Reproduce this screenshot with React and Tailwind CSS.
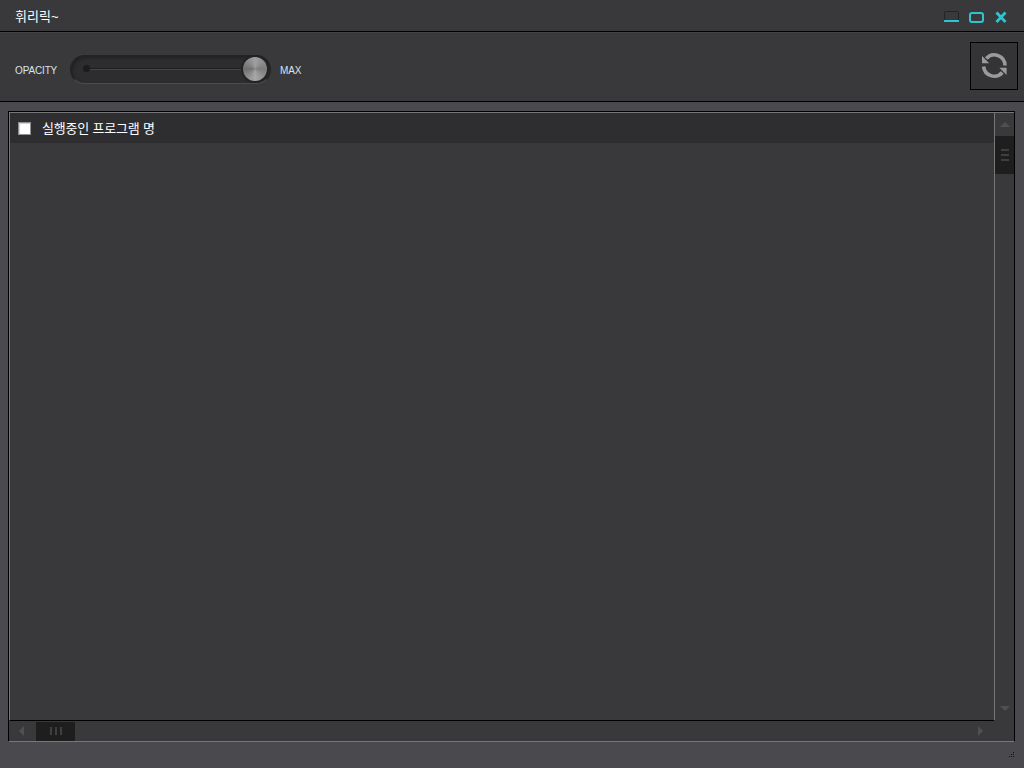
import React from "react";

function Refresh() {
  return (
    <svg width="28" height="28" viewBox="0 0 28 28" fill="none">
      <path d="M25 13.5A10.7 10.7 0 0 0 6.3 6.5" stroke="#9a9a9a" strokeWidth="3.6" />
      <path d="M3.6 14.5A10.7 10.7 0 0 0 22.3 20.5" stroke="#9a9a9a" strokeWidth="3.6" />
      <path d="M2 4V11.3H9.2z" fill="#9a9a9a" />
      <path d="M26.6 23V15.7H19.4z" fill="#9a9a9a" />
    </svg>
  );
}

export default function App() {
  return (
    <div className="w-[1024px] h-[768px] flex flex-col overflow-hidden bg-[#4a4a4e] text-white" style={{ fontFamily: '"Liberation Sans", "Noto Sans CJK KR", sans-serif' }}>
      <div className="h-[32px] shrink-0 flex items-center justify-between bg-[#39393c] border-b border-black pl-[15px] pr-[17px]">
        <span className="text-[13px] leading-none pt-[2px]">휘리릭~</span>
        <div className="flex items-start gap-[10px] pt-[3px]">
          <svg width="15" height="12" viewBox="0 0 15 12" fill="none">
            <rect x="0.5" y="0.5" width="14" height="9" rx="1.5" stroke="#242426" />
            <rect x="0" y="9" width="15" height="2" fill="#2fc4d4" />
          </svg>
          <svg width="15" height="12" viewBox="0 0 15 12" fill="none" className="mr-[1px]">
            <rect x="1" y="2" width="13" height="9" rx="2" stroke="#2fc4d4" strokeWidth="2" />
          </svg>
          <svg width="12" height="12" viewBox="0 0 12 12" fill="none">
            <path d="M1.5 1.5l9 9.5M10.5 1.5l-9 9.5" stroke="#2fc4d4" strokeWidth="2.8" />
          </svg>
        </div>
      </div>
      <div className="h-[70px] shrink-0 flex items-center justify-between bg-[#39393c] border-b border-black border-t border-t-[#444448] pl-[15px] pr-[6px]">
        <div className="flex items-center pt-[5px]">
          <span className="text-[10px] leading-none tracking-[-0.15px] text-[#d5e4f0] w-[55px] mt-[3px]">OPACITY</span>
          <div className="relative w-[201px] h-[29px] rounded-full bg-[#2d2d2f] border border-[#232325] border-b-[#4c4c50] shadow-[inset_2px_2px_3px_#222224]">
            <div className="absolute left-[15px] right-[20px] top-[12px] h-[1px] bg-[#1c1c1e]" />
            <div className="absolute left-[15px] right-[20px] top-[13px] h-[1px] bg-[#47474a]" />
            <div className="absolute left-[12px] top-[9px] w-[7px] h-[7px] rounded-full bg-[#1c1c1e]" />
            <div className="absolute right-[1px] top-[-1px] w-[28px] h-[28px] rounded-full bg-[#232325]" />
            <div className="absolute right-[3px] top-[1px] w-[24px] h-[24px] rounded-full" style={{ background: "conic-gradient(#a0a0a0, #7c7c7c 25%, #a8a8a8 50%, #707070 75%, #a0a0a0)" }} />
          </div>
          <span className="text-[10px] leading-none tracking-[-0.15px] text-[#d5e4f0] ml-[9px] mt-[3px]">MAX</span>
        </div>
        <div className="w-[48px] h-[48px] mb-[2px] flex items-center justify-center bg-[#343437] border border-black">
          <Refresh />
        </div>
      </div>
      <div className="flex-1 min-h-0 pl-[8px] pr-[9px] pt-[9px] pb-[26px]">
        <div className="h-full flex flex-col bg-[#39393c] border-l border-t border-r border-black border-b border-b-[#77777a]">
          <div className="flex-1 min-h-0 flex">
            <div className="flex-1 min-w-0 border-b border-black border-r border-r-[#77777a] border-t border-t-[#77777a] border-l border-l-[#77777a]">
              <div className="h-[30px] flex items-center bg-[#2e2e30] pl-[8px]">
                <span className="w-[13px] h-[13px] bg-white border border-[#8f8f8f] shadow-[inset_1px_1px_1px_#cfcfcf]" />
                <span className="ml-[11px] text-[13px] leading-none tracking-[-0.2px]">실행중인 프로그램 명</span>
              </div>
            </div>
            <div className="w-[19px] shrink-0 flex flex-col items-center border-t border-t-[#77777a]">
              <div className="h-[23px] flex items-center justify-center w-full">
                <div className="w-0 h-0 border-x-[5px] border-x-transparent border-b-[5px] border-b-[#505053]" />
              </div>
              <div className="h-[38px] w-full bg-[#1e1e1f] flex flex-col items-center justify-center gap-[3px]">
                <span className="w-[8px] h-[2px] bg-[#3f3f41]" />
                <span className="w-[8px] h-[2px] bg-[#3f3f41]" />
                <span className="w-[8px] h-[2px] bg-[#3f3f41]" />
              </div>
              <div className="flex-1" />
              <div className="h-[26px] flex items-center justify-center w-full">
                <div className="w-0 h-0 border-x-[5px] border-x-transparent border-t-[5px] border-t-[#505053]" />
              </div>
            </div>
          </div>
          <div className="h-[20px] shrink-0 flex items-center pr-[31px]">
            <div className="w-[27px] pr-[2px] flex items-center justify-center">
              <div className="w-0 h-0 border-y-[5px] border-y-transparent border-r-[5px] border-r-[#505053]" />
            </div>
            <div className="w-[39px] h-[19px] bg-[#1e1e1f] flex items-center justify-center gap-[3px]">
              <span className="w-[2px] h-[8px] bg-[#3f3f41]" />
              <span className="w-[2px] h-[8px] bg-[#3f3f41]" />
              <span className="w-[2px] h-[8px] bg-[#3f3f41]" />
            </div>
            <div className="flex-1" />
            <div className="w-0 h-0 border-y-[5px] border-y-transparent border-l-[5px] border-l-[#505053]" />
          </div>
        </div>
      </div>
      <div className="relative h-0">
        <svg className="absolute right-[9px] bottom-[10px]" width="6" height="6" viewBox="0 0 6 6" fill="#111">
          <rect x="4" y="0" width="1" height="1" /><rect x="2" y="2" width="1" height="1" /><rect x="4" y="2" width="1" height="1" />
          <rect x="0" y="4" width="1" height="1" /><rect x="2" y="4" width="1" height="1" /><rect x="4" y="4" width="1" height="1" />
        </svg>
      </div>
    </div>
  );
}
